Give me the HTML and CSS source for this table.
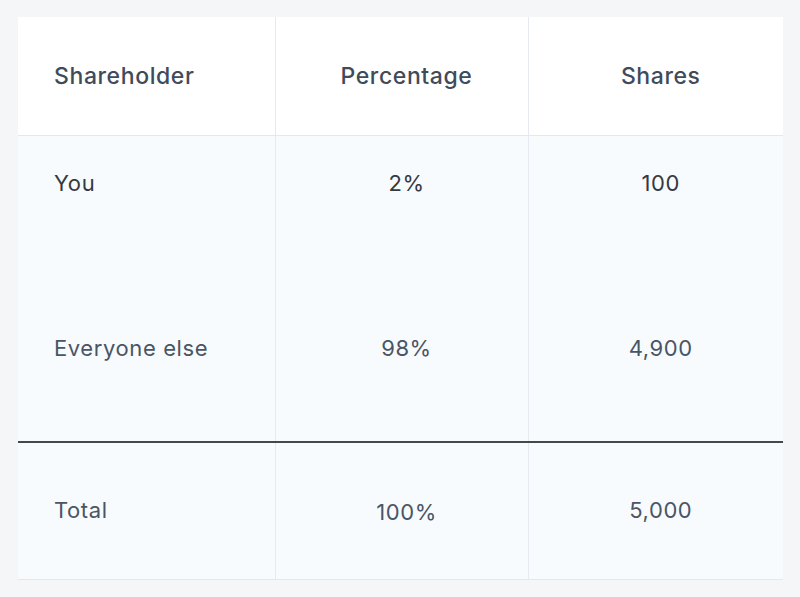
FILE: index.html
```html
<!DOCTYPE html>
<html lang="en">

<head>
    <meta charset="UTF-8">
    <meta name="viewport" content="width=device-width, initial-scale=1.0">
    <title>Shareholders</title>
    <link rel="stylesheet" href="styles.css">
</head>

<body>
    <!-- Cap table -->
    <table class="cap-table">
        <colgroup>
            <col class="col-name">
            <col class="col-pct">
            <col class="col-shares">
        </colgroup>
        <thead>
            <tr>
                <th class="left">Shareholder</th>
                <th>Percentage</th>
                <th>Shares</th>
            </tr>
        </thead>
        <tbody>
            <tr class="row-you">
                <td class="left">You</td>
                <td>2%</td>
                <td>100</td>
            </tr>
            <tr class="row-others">
                <td class="left">Everyone else</td>
                <td>98%</td>
                <td>4,900</td>
            </tr>
        </tbody>
        <tfoot>
            <tr class="row-total">
                <td class="left">Total</td>
                <td class="pct-total">100%</td>
                <td>5,000</td>
            </tr>
        </tfoot>
    </table>
</body>

</html>
```

FILE: styles.css
```css
body {
    margin: 0;
    padding: 17px 17px 0 18px;
    background-color: #f5f6f8;
    font-family: Inter, "Liberation Sans", sans-serif;
}

/* Table */
.cap-table {
    width: 765px;
    border-collapse: collapse;
    table-layout: fixed;
    background-color: #f7fbfe;
}

.col-name {
    width: 257px;
}

.col-pct {
    width: 253px;
}

.col-shares {
    width: 255px;
}

.cap-table th,
.cap-table td {
    text-align: center;
    padding: 0 26px 0 36px;
    border-left: 1px solid #e6eaf0;
    letter-spacing: 0.6px;
}

.cap-table th:first-child,
.cap-table td:first-child {
    border-left: none;
}

.cap-table .left {
    text-align: left;
}

/* Header */
.cap-table thead th {
    height: 118px;
    background-color: #fff;
    border-bottom: 1px solid #e1e8f0;
    color: #3f4b5b;
    font-size: 23px;
    font-weight: 500;
    vertical-align: middle;
}

/* Body rows */
.cap-table tbody td {
    vertical-align: top;
    font-size: 22px;
    line-height: 30px;
}

.row-you td {
    height: 120px;
    padding-top: 32px;
    color: #35393f;
}

.row-others td {
    height: 108px;
    padding-top: 45px;
    color: #4a5565;
}

/* Total */
.cap-table tfoot td {
    height: 129px;
    padding-bottom: 3px;
    border-top: 2px solid #454749;
    border-bottom: 1px solid #e3e8ee;
    color: #4a5565;
    font-size: 22px;
    vertical-align: middle;
}

.cap-table tfoot .pct-total {
    padding-top: 4px;
}
```
